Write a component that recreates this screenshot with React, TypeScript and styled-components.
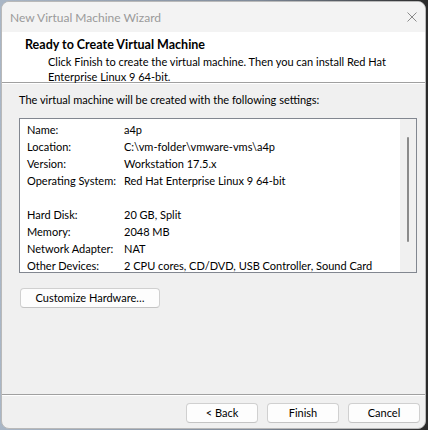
import React from "react";
import styled, { createGlobalStyle } from "styled-components";

const Global = createGlobalStyle`
  html, body { margin: 0; padding: 0; }
  body {
    background: linear-gradient(90deg, #a9b6c6 0%, #7f8a99 60%, #2a2a2a 100%);
    width: 428px; height: 430px; overflow: hidden;
    font-family: Lato, "Noto Sans", sans-serif;
    font-size: 11px;
    color: #000;
  }
`;

const Window = styled.div`
  margin: 1px 0 0 1px;
  width: 425px;
  height: 428px;
  box-sizing: border-box;
  border: 1px solid #b9b9b9;
  border-radius: 8px;
  overflow: hidden;
  background: #f0f0f0;
  display: flex;
  flex-direction: column;
`;

const TitleBar = styled.div`
  height: 30px;
  flex: none;
  background: #f3f3f3;
  display: flex;
  align-items: center;
  justify-content: space-between;
  padding: 0 8px 0 8px;
  box-sizing: border-box;
`;

const TitleText = styled.span`
  color: #9a9a9a;
  font-size: 12px;
`;

const Header = styled.div`
  flex: none;
  height: 51px;
  box-sizing: border-box;
  background: #fff;
  border-bottom: 1px solid #a0a0a0;
  box-shadow: 0 1px 0 #ffffff;
  padding: 5px 0 0 23px;
  white-space: nowrap;
`;

const HeaderTitle = styled.div`
  font-weight: 700;
  font-size: 12.5px;
  line-height: 16px;
`;

const HeaderSub = styled.div`
  margin-top: 1px;
  padding-left: 23px;
  line-height: 15px;
`;

const Body = styled.div`
  flex: 1;
  display: flex;
  flex-direction: column;
  align-items: flex-start;
  padding: 9px 0 0 17px;
`;

const Intro = styled.div`
  line-height: 16px;
`;

const ListBox = styled.div`
  margin-top: 10px;
  width: 398px;
  height: 155px;
  box-sizing: border-box;
  border: 1px solid #828790;
  background: #fff;
  display: flex;
`;

const Rows = styled.div`
  flex: 1;
  padding: 2px 0 0 7px;
`;

const Row = styled.div`
  display: grid;
  grid-template-columns: 97px 1fr;
  height: 17px;
  line-height: 17px;
  white-space: nowrap;
`;

const ScrollTrack = styled.div`
  width: 16px;
  flex: none;
  background: #f0f0f0;
  display: flex;
  justify-content: center;
  padding-top: 18px;
  box-sizing: border-box;
`;

const ScrollThumb = styled.div`
  width: 2px;
  height: 105px;
  background: #8b8b8b;
  border-radius: 1px;
`;

const Button = styled.button<{ $w: number }>`
  width: ${(p) => p.$w}px;
  height: 20px;
  box-sizing: border-box;
  border: 1px solid #d0d0d0;
  border-bottom-color: #c4c4c4;
  border-radius: 4px;
  background: #fdfdfd;
  font-family: inherit;
  font-size: 11px;
  color: #000;
  padding: 0;
  line-height: 18px;
`;

const CustomizeWrap = styled.div`
  margin-top: 15px;
  padding-left: 1px;
`;

const Footer = styled.div`
  flex: none;
  height: 34px;
  border-top: 1px solid #a0a0a0;
  box-shadow: inset 0 1px 0 #ffffff;
  display: flex;
  justify-content: flex-end;
  align-items: flex-start;
  gap: 9px;
  padding: 8px 5px 0 0;
  box-sizing: border-box;
`;

const rows: [string, string][] = [
  ["Name:", "a4p"],
  ["Location:", "C:\\vm-folder\\vmware-vms\\a4p"],
  ["Version:", "Workstation 17.5.x"],
  ["Operating System:", "Red Hat Enterprise Linux 9 64-bit"],
  ["", ""],
  ["Hard Disk:", "20 GB, Split"],
  ["Memory:", "2048 MB"],
  ["Network Adapter:", "NAT"],
  ["Other Devices:", "2 CPU cores, CD/DVD, USB Controller, Sound Card"],
];

export default function App() {
  return (
    <>
      <Global />
      <Window>
        <TitleBar>
          <TitleText>New Virtual Machine Wizard</TitleText>
          <svg width="10" height="10" viewBox="0 0 10 10">
            <path d="M0.5 0.5 L9.5 9.5 M9.5 0.5 L0.5 9.5" stroke="#8a8a8a" strokeWidth="1" />
          </svg>
        </TitleBar>
        <Header>
          <HeaderTitle>Ready to Create Virtual Machine</HeaderTitle>
          <HeaderSub>
            Click Finish to create the virtual machine. Then you can install Red Hat
            <br />
            Enterprise Linux 9 64-bit.
          </HeaderSub>
        </Header>
        <Body>
          <Intro>The virtual machine will be created with the following settings:</Intro>
          <ListBox>
            <Rows>
              {rows.map(([k, v], i) => (
                <Row key={i}>
                  <span>{k}</span>
                  <span>{v}</span>
                </Row>
              ))}
            </Rows>
            <ScrollTrack>
              <ScrollThumb />
            </ScrollTrack>
          </ListBox>
          <CustomizeWrap>
            <Button $w={140}>Customize Hardware…</Button>
          </CustomizeWrap>
        </Body>
        <Footer>
          <Button $w={72}>&lt; Back</Button>
          <Button $w={72}>Finish</Button>
          <Button $w={72}>Cancel</Button>
        </Footer>
      </Window>
    </>
  );
}
